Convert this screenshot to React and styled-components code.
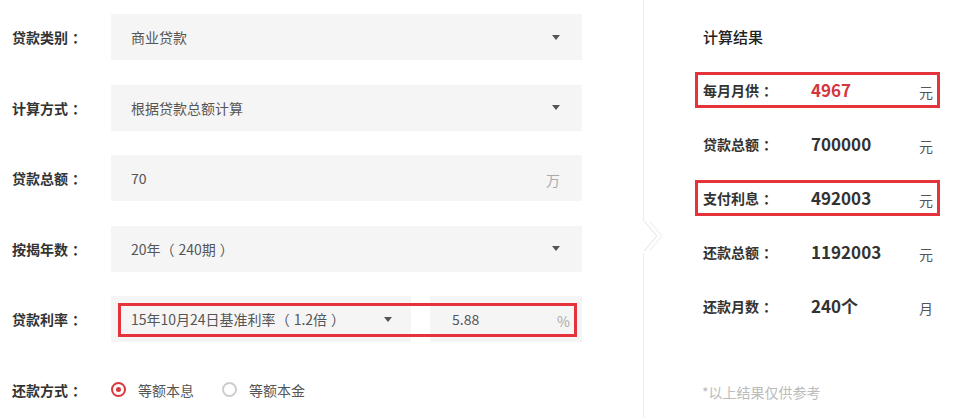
import React from "react";
import styled, { createGlobalStyle } from "styled-components";

const Global = createGlobalStyle`
  html, body { margin: 0; padding: 0; background: #fff; }
  body { font-family: "Noto Sans CJK SC", "Noto Sans", sans-serif; }
`;

const Page = styled.div`
  width: 954px;
  height: 418px;
  display: flex;
  overflow: hidden;
  background: #fff;
`;

const Form = styled.div`
  width: 643px;
  box-sizing: border-box;
  padding: 14px 0 0 12px;
  display: flex;
  flex-direction: column;
  gap: 24.5px;
`;

const Row = styled.div`
  display: flex;
  align-items: center;
  height: 46px;
`;

const Label = styled.div`
  width: 99px;
  font-size: 14px;
  font-weight: 700;
  color: #333;
  line-height: 20px;
`;

const Colon = styled.span`
  margin-left: 4px;
`;

const Field = styled.div`
  position: relative;
  width: 471px;
  height: 46px;
  display: flex;
  gap: 19px;
`;

const Box = styled.div`
  flex: ${(p) => (p.$w ? `0 0 ${p.$w}px` : "1")};
  height: 46px;
  background: #f5f5f5;
  box-sizing: border-box;
  padding: 0 ${(p) => p.$pr ?? 22}px 0 ${(p) => p.$pl ?? 20}px;
  display: flex;
  align-items: center;
  justify-content: space-between;
  font-size: 14px;
  color: #555;
  line-height: 20px;
`;

const Caret = styled.span`
  width: 0;
  height: 0;
  border-left: 4px solid transparent;
  border-right: 4px solid transparent;
  border-top: 5px solid #555;
`;

const Paren = styled.span`
  margin: 0 ${(p) => (p.$open ? "4px 0 0" : "0 0 4px")};
`;

const Suffix = styled.span`
  color: #aaa;
  font-size: 14px;
  margin-top: 4px;
`;

const Annotation = styled.div`
  position: absolute;
  left: 7px;
  top: 7px;
  width: 459px;
  height: 34px;
  box-sizing: border-box;
  border: 3px solid #e5333b;
  pointer-events: none;
`;

const Radios = styled.div`
  display: flex;
  align-items: center;
`;

const RadioItem = styled.label`
  display: flex;
  align-items: center;
  font-size: 14px;
  color: #555;
  line-height: 20px;
  margin-right: 28px;
`;

const Dot = styled.span`
  width: 15px;
  height: 15px;
  box-sizing: border-box;
  border-radius: 50%;
  border: 2px solid ${(p) => (p.$on ? "#d9363e" : "#ccc")};
  display: flex;
  align-items: center;
  justify-content: center;
  margin: 0 12px 0 0;
  &::after {
    content: "";
    width: 5px;
    height: 5px;
    border-radius: 50%;
    background: ${(p) => (p.$on ? "#d9363e" : "transparent")};
  }
`;

const Result = styled.div`
  position: relative;
  flex: 1;
  border-left: 1px solid #ececec;
  padding-left: 51px;
  display: flex;
  flex-direction: column;
`;

const Chevron = styled.svg`
  position: absolute;
  left: -1px;
  top: 221px;
`;

const Heading = styled.div`
  margin: 27px 0 0 8px;
  font-size: 15px;
  font-weight: 500;
  color: #222;
  line-height: 20px;
`;

const ResultList = styled.div`
  margin-top: 25px;
  display: flex;
  flex-direction: column;
  gap: 18px;
`;

const ResultRow = styled.div`
  width: 245px;
  height: 36px;
  box-sizing: border-box;
  border: 3px solid ${(p) => (p.$mark ? "#e5333b" : "transparent")};
  padding-left: 5px;
  display: flex;
  align-items: center;
`;

const RLabel = styled.span`
  width: 108px;
  font-size: 14px;
  font-weight: 700;
  color: #333;
  line-height: 20px;
`;

const RValue = styled.span`
  width: 108px;
  font-size: 17px;
  font-weight: 700;
  color: ${(p) => (p.$red ? "#d3373d" : "#333")};
  line-height: 22px;
`;

const RUnit = styled.span`
  font-size: 14px;
  color: #555;
  line-height: 20px;
  margin-top: 3px;
`;

const Note = styled.div`
  margin: 58px 0 0 7px;
  font-size: 14px;
  color: #bbb;
  line-height: 20px;
`;

const results = [
  { label: "每月月供", value: "4967", unit: "元", mark: true, red: true },
  { label: "贷款总额", value: "700000", unit: "元" },
  { label: "支付利息", value: "492003", unit: "元", mark: true },
  { label: "还款总额", value: "1192003", unit: "元" },
  { label: "还款月数", value: "240个", unit: "月" },
];

const FormLabel = ({ children }) => (
  <Label>
    {children}
    <Colon>：</Colon>
  </Label>
);

export default function App() {
  return (
    <Page>
      <Global />
      <Form>
        <Row>
          <FormLabel>贷款类别</FormLabel>
          <Field>
            <Box>
              <span>商业贷款</span>
              <Caret />
            </Box>
          </Field>
        </Row>
        <Row>
          <FormLabel>计算方式</FormLabel>
          <Field>
            <Box>
              <span>根据贷款总额计算</span>
              <Caret />
            </Box>
          </Field>
        </Row>
        <Row>
          <FormLabel>贷款总额</FormLabel>
          <Field>
            <Box>
              <span>70</span>
              <Suffix>万</Suffix>
            </Box>
          </Field>
        </Row>
        <Row>
          <FormLabel>按揭年数</FormLabel>
          <Field>
            <Box>
              <span>
                20年<Paren $open>（</Paren>240期<Paren>）</Paren>
              </span>
              <Caret />
            </Box>
          </Field>
        </Row>
        <Row>
          <FormLabel>贷款利率</FormLabel>
          <Field>
            <Box $w={300} $pr={19}>
              <span>
                15年10月24日基准利率<Paren $open>（</Paren>1.2倍<Paren>）</Paren>
              </span>
              <Caret />
            </Box>
            <Box $pl={22} $pr={12}>
              <span>5.88</span>
              <Suffix>%</Suffix>
            </Box>
            <Annotation />
          </Field>
        </Row>
        <Row>
          <FormLabel>还款方式</FormLabel>
          <Radios>
            <RadioItem>
              <Dot $on />
              等额本息
            </RadioItem>
            <RadioItem>
              <Dot />
              等额本金
            </RadioItem>
          </Radios>
        </Row>
      </Form>
      <Result>
        <Chevron width="26" height="32" viewBox="0 0 26 32">
          <rect x="0" y="0" width="3" height="32" fill="#fff" />
          <polyline points="1,0 14,15 1,30" fill="none" stroke="#ececec" strokeWidth="1.2" />
          <polyline points="7,1 19,15 7,29" fill="none" stroke="#f2f2f2" strokeWidth="1.2" />
        </Chevron>
        <Heading>计算结果</Heading>
        <ResultList>
          {results.map((r) => (
            <ResultRow key={r.label} $mark={r.mark}>
              <RLabel>
                {r.label}
                <Colon>：</Colon>
              </RLabel>
              <RValue $red={r.red}>{r.value}</RValue>
              <RUnit>{r.unit}</RUnit>
            </ResultRow>
          ))}
        </ResultList>
        <Note>*以上结果仅供参考</Note>
      </Result>
    </Page>
  );
}
